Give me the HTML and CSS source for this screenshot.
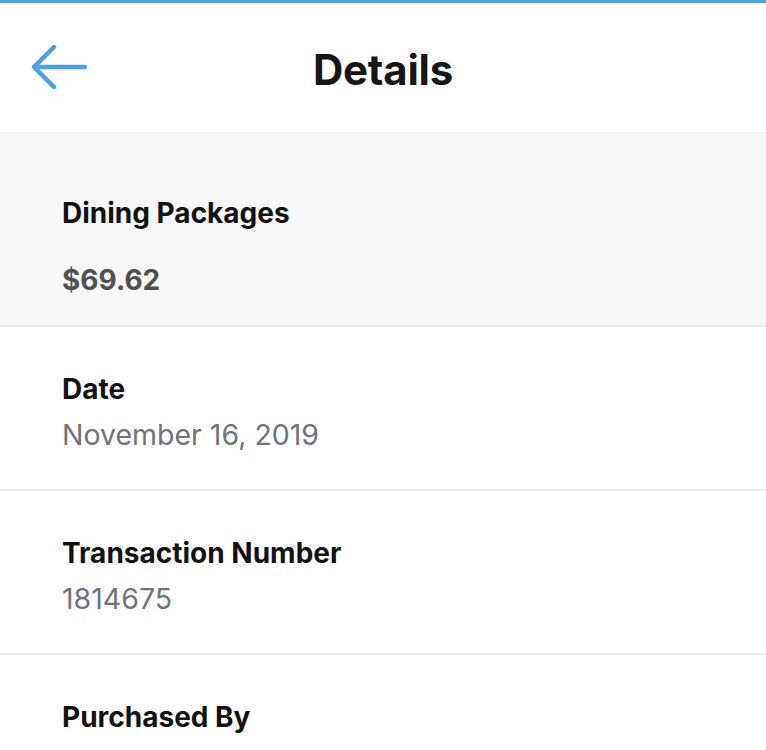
FILE: index.html
```html
<!DOCTYPE html>
<html>
<head>
<meta charset="utf-8">
<link rel="stylesheet" href="styles.css">
</head>
<body>
<div class="page">
<div class="topline"></div>
<header class="header">
  <button class="back" aria-label="Back">
    <svg width="58" height="44" viewBox="0 0 58 44"><path d="M24 2 L4 22 L24 42 M4 22 H55" fill="none" stroke="#4d9fe6" stroke-width="4.5" stroke-linecap="round" stroke-linejoin="round"/></svg>
  </button>
  <h1 class="title">Details</h1>
</header>
<section class="summary">
  <div class="summary-name">Dining Packages</div>
  <div class="summary-amount">$69.62</div>
</section>
<section class="row">
  <div class="label">Date</div>
  <div class="value">November 16, 2019</div>
</section>
<section class="row">
  <div class="label">Transaction Number</div>
  <div class="value">1814675</div>
</section>
<section class="row last">
  <div class="label">Purchased By</div>
</section>
</div>
</body>
</html>
```
FILE: styles.css
```css
html, body {
  margin: 0;
  padding: 0;
  background: #ffffff;
  font-family: "Inter", "Lato", sans-serif;
}
.page {
  height: 750px;
  overflow: hidden;
}
.topline {
  height: 3px;
  background: #5b9ee2;
}
.header {
  height: 129px;
  display: flex;
  align-items: center;
  justify-content: center;
  position: relative;
  background: #fff;
}
.back {
  position: absolute;
  left: 30px;
  top: 42px;
  padding: 0;
  border: 0;
  background: none;
  display: flex;
}
.title {
  margin: 0;
  font-size: 42px;
  font-weight: 700;
  color: #161616;
  letter-spacing: -0.2px;
  padding-top: 4px;
}
.summary {
  background: #f7f7f7;
  height: 195px;
  padding: 0 62px;
  box-sizing: border-box;
  border-bottom: 2px solid #ebebeb;
  display: flex;
  flex-direction: column;
  padding-top: 64px;
  gap: 33px;
}
.summary-name {
  font-size: 28px;
  font-weight: 700;
  color: #121212;
  line-height: 34px;
}
.summary-amount {
  font-size: 28px;
  font-weight: 700;
  color: #505050;
  line-height: 34px;
}
.row {
  height: 164px;
  box-sizing: border-box;
  padding: 45px 62px 0;
  border-bottom: 2px solid #ebebeb;
  display: flex;
  flex-direction: column;
  gap: 12px;
}
.row.last {
  height: 96px;
  border-bottom: 0;
}
.label {
  font-size: 28px;
  font-weight: 700;
  color: #121212;
  line-height: 34px;
}
.value {
  font-size: 28.5px;
  font-weight: 400;
  color: #6e737c;
  line-height: 34px;
}
```
